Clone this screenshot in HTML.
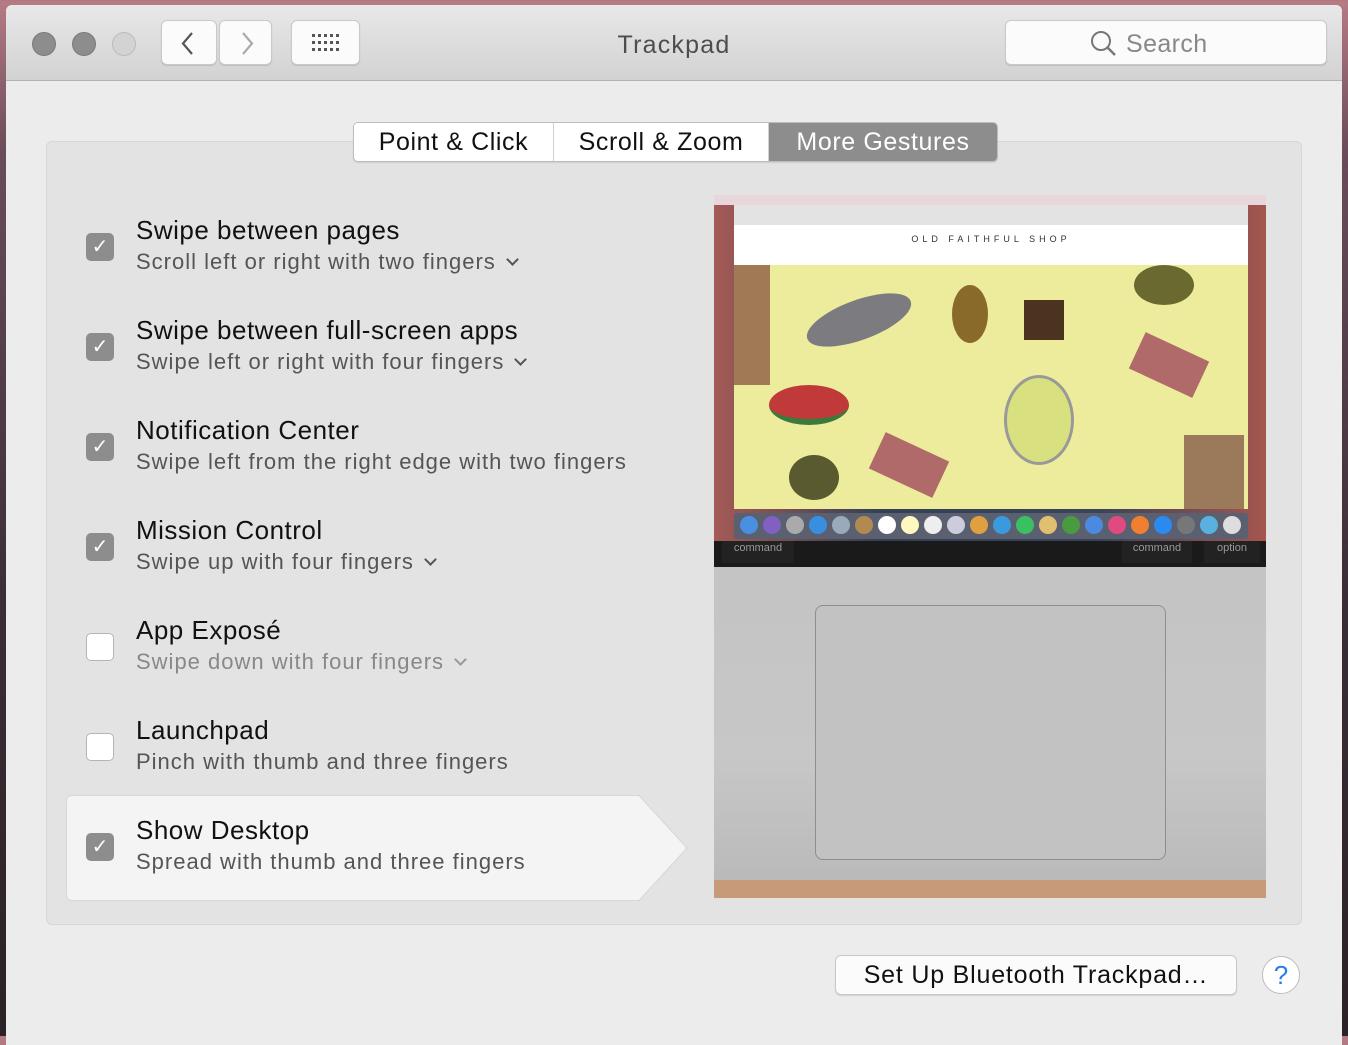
<!DOCTYPE html>
<html><head><meta charset="utf-8"><style>
*{margin:0;padding:0;box-sizing:border-box}
body{width:1348px;height:1036px;overflow:hidden;background:linear-gradient(180deg,#b77b84 0,#6a4c5a 150px,#3a2e36 600px,#2a2226 1036px);font-family:"Liberation Sans",sans-serif;position:relative}
.win{position:absolute;left:6px;top:5px;width:1336px;height:1040px;background:#ececec;border-radius:6px 6px 0 0;overflow:hidden}
.tb{position:absolute;left:0;top:0;width:100%;height:76px;background:linear-gradient(#e9e8e9,#d3d2d3);border-bottom:1px solid #b3b3b3}
.dot{position:absolute;top:27px;width:24px;height:24px;border-radius:50%;background:#8e8d8e;border:1px solid #7a797a}
.btn{position:absolute;top:15px;height:45px;background:#fbfbfb;border:1px solid #c9c9c9;border-radius:6px;box-shadow:0 1px 1px rgba(0,0,0,.12)}
.title{position:absolute;left:0;width:100%;top:26px;text-align:center;font-size:25px;color:#4d4d4d;letter-spacing:1.2px}
.panel{position:absolute;left:40px;top:136px;width:1256px;height:784px;background:#e3e3e3;border:1px solid #d6d6d6;border-radius:6px}
.tabs{position:absolute;left:347px;top:117px;height:40px;display:flex;border:1px solid #bdbdbd;border-radius:5px;overflow:hidden;box-shadow:0 1px 1px rgba(0,0,0,.1)}
.tabs div{background:#fff;font-size:25px;line-height:38px;border-right:1px solid #d0d0d0;color:#111;text-align:center;letter-spacing:0.6px}
.tabs div.sel{background:#8e8d8e;color:#fff;border:none}
.item{position:absolute;left:130px}
.item .h{font-size:26px;color:#111;line-height:30px;letter-spacing:0.5px}
.item .s{font-size:22px;color:#555;line-height:28px;margin-top:3px;letter-spacing:1px}
.cb{position:absolute;left:80px;width:28px;height:28px;border-radius:5px;background:#8e8d8e;color:#fff;font-size:20px;text-align:center;line-height:28px}
.cb.off{background:#fff;border:1px solid #b5b5b5}
.chev{display:inline-block;width:9px;height:9px;border-right:2.5px solid #555;border-bottom:2.5px solid #555;transform:rotate(45deg);margin-left:12px;position:relative;top:-5px}
.o{position:absolute;border-radius:50%}
</style></head><body>
<div class="win">
<div class="tb">
<div class="dot" style="left:26px"></div><div class="dot" style="left:66px"></div><div class="dot" style="left:106px;background:#d3d3d3;border-color:#bcbcbc"></div>
<div class="btn" style="left:155px;width:56px"><svg width="56" height="45"><path d="M30 12 L21 22.5 L30 33" fill="none" stroke="#555" stroke-width="2.2"/></svg></div>
<div class="btn" style="left:213px;width:53px"><svg width="53" height="45"><path d="M23 12 L32 22.5 L23 33" fill="none" stroke="#aaa" stroke-width="2.2"/></svg></div>
<div class="btn" style="left:285px;width:69px"><svg width="69" height="45"><g fill="#555"><rect x="20" y="13" width="3" height="3"/><rect x="26" y="13" width="3" height="3"/><rect x="32" y="13" width="3" height="3"/><rect x="38" y="13" width="3" height="3"/><rect x="44" y="13" width="3" height="3"/><rect x="20" y="20" width="3" height="3"/><rect x="26" y="20" width="3" height="3"/><rect x="32" y="20" width="3" height="3"/><rect x="38" y="20" width="3" height="3"/><rect x="44" y="20" width="3" height="3"/><rect x="20" y="27" width="3" height="3"/><rect x="26" y="27" width="3" height="3"/><rect x="32" y="27" width="3" height="3"/><rect x="38" y="27" width="3" height="3"/><rect x="44" y="27" width="3" height="3"/></g></svg></div>
<div class="title">Trackpad</div>
<div class="btn" style="left:999px;width:322px"><svg width="30" height="30" style="position:absolute;left:83px;top:8px"><circle cx="12" cy="12" r="9" fill="none" stroke="#777" stroke-width="2"/><path d="M18.5 18.5 L26 26" stroke="#777" stroke-width="2.4"/></svg><span style="position:absolute;left:120px;top:9px;font-size:25px;color:#888;letter-spacing:0.4px">Search</span></div>
</div>
<div class="panel"></div>
<div class="tabs"><div style="width:200px">Point &amp; Click</div><div style="width:215px">Scroll &amp; Zoom</div><div class="sel" style="width:228px">More Gestures</div></div>

<svg style="position:absolute;left:60px;top:790px" width="625" height="106"><path d="M6 0.5 H573 L621 53 L573 105.5 H6 Q0.5 105.5 0.5 100 V6 Q0.5 0.5 6 0.5Z" fill="#f4f4f4" stroke="#d6d6d6"/></svg>

<div class="cb" style="top:228px">✓</div><div class="item" style="top:210px"><div class="h">Swipe between pages</div><div class="s">Scroll left or right with two fingers<span class="chev"></span></div></div>
<div class="cb" style="top:328px">✓</div><div class="item" style="top:310px"><div class="h">Swipe between full-screen apps</div><div class="s">Swipe left or right with four fingers<span class="chev"></span></div></div>
<div class="cb" style="top:428px">✓</div><div class="item" style="top:410px"><div class="h">Notification Center</div><div class="s">Swipe left from the right edge with two fingers</div></div>
<div class="cb" style="top:528px">✓</div><div class="item" style="top:510px"><div class="h">Mission Control</div><div class="s">Swipe up with four fingers<span class="chev"></span></div></div>
<div class="cb off" style="top:628px"></div><div class="item" style="top:610px"><div class="h">App Exposé</div><div class="s" style="color:#888">Swipe down with four fingers<span class="chev" style="border-color:#999"></span></div></div>
<div class="cb off" style="top:728px"></div><div class="item" style="top:710px"><div class="h">Launchpad</div><div class="s">Pinch with thumb and three fingers</div></div>
<div class="cb" style="top:828px">✓</div><div class="item" style="top:810px"><div class="h">Show Desktop</div><div class="s">Spread with thumb and three fingers</div></div>

<div style="position:absolute;left:708px;top:190px;width:552px;height:703px;background:linear-gradient(#bdbdbd,#c7c7c7 80%,#b8b8b8);overflow:hidden">
 <div style="position:absolute;left:0;top:0;width:552px;height:346px;background:linear-gradient(90deg,#a55a55,#334055 30%,#39445a 70%,#a5564e)"></div>
 <div style="position:absolute;left:0;top:0;width:552px;height:10px;background:#e8d6da"></div>
 <div style="position:absolute;left:20px;top:10px;width:514px;height:20px;background:#e3e3e3"></div>
 <div style="position:absolute;left:20px;top:30px;width:514px;height:40px;background:#fff;font-size:9px;letter-spacing:4px;text-align:center;line-height:28px;color:#333">OLD FAITHFUL SHOP</div>
 <div style="position:absolute;left:20px;top:70px;width:514px;height:244px;background:#ecec9c;overflow:hidden">
  <div class="o" style="left:70px;top:35px;width:110px;height:40px;background:#7c7c80;transform:rotate(-20deg)"></div>
  <div class="o" style="left:218px;top:20px;width:36px;height:58px;background:#8a6a2a"></div>
  <div style="position:absolute;left:290px;top:35px;width:40px;height:40px;background:#4a3420"></div>
  <div class="o" style="left:400px;top:0;width:60px;height:40px;background:#6a6a30"></div>
  <div class="o" style="left:35px;top:120px;width:80px;height:40px;background:#c03a3a;border-bottom:6px solid #3a7a3a"></div>
  <div class="o" style="left:270px;top:110px;width:70px;height:90px;background:#d8e080;border:3px solid #999"></div>
  <div style="position:absolute;left:400px;top:80px;width:70px;height:40px;background:#b06a6a;transform:rotate(25deg)"></div>
  <div style="position:absolute;left:140px;top:180px;width:70px;height:40px;background:#b06a6a;transform:rotate(25deg)"></div>
  <div class="o" style="left:55px;top:190px;width:50px;height:45px;background:#5a5a30"></div>
  <div style="position:absolute;left:450px;top:170px;width:60px;height:74px;background:#9a7a5a"></div>
  <div style="position:absolute;left:0;top:0;width:36px;height:120px;background:#a07a55"></div>
 </div>
 <div style="position:absolute;left:20px;top:318px;width:514px;height:26px;background:#5a6070;border-radius:3px;display:flex;gap:5px;padding:3px 6px">
  <span class="o" style="position:static;width:18px;height:18px;background:#4a90e0"></span><span class="o" style="position:static;width:18px;height:18px;background:#8060c0"></span><span class="o" style="position:static;width:18px;height:18px;background:#aaa"></span><span class="o" style="position:static;width:18px;height:18px;background:#3a8ee0"></span><span class="o" style="position:static;width:18px;height:18px;background:#9ab"></span><span class="o" style="position:static;width:18px;height:18px;background:#b08a50"></span><span class="o" style="position:static;width:18px;height:18px;background:#fff"></span><span class="o" style="position:static;width:18px;height:18px;background:#fff8c0"></span><span class="o" style="position:static;width:18px;height:18px;background:#eee"></span><span class="o" style="position:static;width:18px;height:18px;background:#ccd"></span><span class="o" style="position:static;width:18px;height:18px;background:#e0a040"></span><span class="o" style="position:static;width:18px;height:18px;background:#3a9ae0"></span><span class="o" style="position:static;width:18px;height:18px;background:#3ac060"></span><span class="o" style="position:static;width:18px;height:18px;background:#e0c070"></span><span class="o" style="position:static;width:18px;height:18px;background:#4a9a40"></span><span class="o" style="position:static;width:18px;height:18px;background:#4a8ae0"></span><span class="o" style="position:static;width:18px;height:18px;background:#e04a80"></span><span class="o" style="position:static;width:18px;height:18px;background:#f08030"></span><span class="o" style="position:static;width:18px;height:18px;background:#2a8af0"></span><span class="o" style="position:static;width:18px;height:18px;background:#777"></span><span class="o" style="position:static;width:18px;height:18px;background:#5ab0e0"></span><span class="o" style="position:static;width:18px;height:18px;background:#ddd"></span>
 </div>
 <div style="position:absolute;left:0;top:346px;width:552px;height:26px;background:#1a1a1a"></div>
 <div style="position:absolute;left:8px;top:346px;width:72px;height:22px;background:#222;color:#999;font-size:11px;text-align:center;line-height:14px">command</div>
 <div style="position:absolute;left:408px;top:346px;width:70px;height:22px;background:#222;color:#999;font-size:11px;text-align:center;line-height:14px">command</div>
 <div style="position:absolute;left:490px;top:346px;width:56px;height:22px;background:#222;color:#999;font-size:11px;text-align:center;line-height:14px">option</div>
 <div style="position:absolute;left:101px;top:410px;width:351px;height:255px;border:1.5px solid #8e8e8e;border-radius:8px;background:#c2c2c2"></div>
 <div style="position:absolute;left:0;top:685px;width:552px;height:18px;background:#c79a7a"></div>
</div>

<div class="btn" style="left:829px;top:950px;width:402px;height:40px;font-size:25px;text-align:center;line-height:38px;color:#111;letter-spacing:0.8px">Set Up Bluetooth Trackpad…</div>
<div style="position:absolute;left:1256px;top:951px;width:38px;height:38px;border-radius:50%;background:#fff;border:1px solid #bdbdbd;color:#2a7cf0;font-size:26px;text-align:center;line-height:36px">?</div>
</div>
</body></html>
